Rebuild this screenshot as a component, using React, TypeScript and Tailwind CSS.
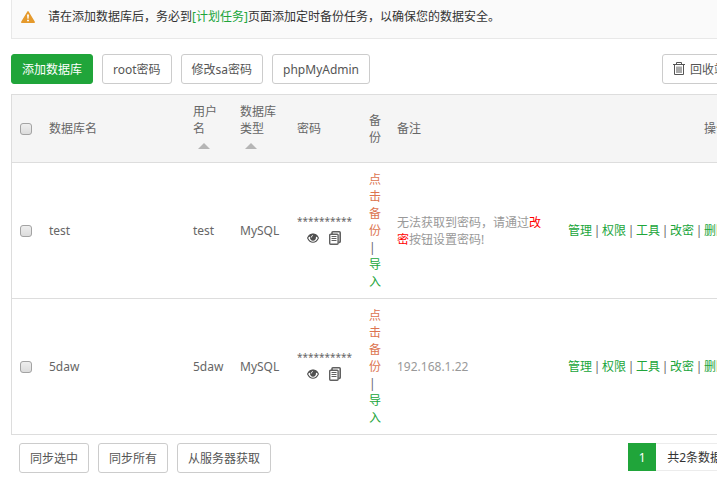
import { Fragment } from 'react';

const rows = [
    { name: 'test', user: 'test', type: 'MySQL', remark: '' },
    { name: '5daw', user: '5daw', type: 'MySQL', remark: '192.168.1.22' }
];

const actions = ['管理', '权限', '工具', '改密', '删除'];

const buttonClass = 'h-[30px] shrink-0 whitespace-nowrap rounded-[3px] border border-[#ccc] bg-white px-[10px] text-[#555]';
const checkboxClass = 'block size-3 appearance-none rounded-[3px] border border-[#a3a3a3] bg-gradient-to-b from-[#eee] to-[#dcdcdc] checked:from-[#20a53a] checked:to-[#20a53a]';
const linkClass = 'text-[#20a53a] hover:underline';

function WarningIcon() {
    return (
        <svg className="h-3 w-[14px] shrink-0" viewBox="0 0 14 12" aria-hidden="true">
            <path d="M7 .8 13.200 11.200H.8Z" fill="#e59a2c" stroke="#e59a2c" strokeWidth="1.500" strokeLinejoin="round" />
            <path d="M6 3.500h2l-.4 4.200H6.400zM6.100 8.700h1.800v1.600H6.100z" fill="#fff" />
        </svg>
    );
}

function TrashIcon() {
    return (
        <svg className="h-[14px] w-3" viewBox="0 0 12 14" fill="none" stroke="#555" aria-hidden="true">
            <path d="M0 2.500h12M3.500 2.500v-2h5v2M1.500 2.500v10h9v-10M4 4.500v6.500M6 4.500v6.500M8 4.500v6.500" />
        </svg>
    );
}

function EyeIcon() {
    return (
        <svg className="h-[10px] w-3" viewBox="0 0 12 10" aria-hidden="true">
            <path d="M.6 5C1.800 2.500 3.700 1.100 6 1.100S10.200 2.500 11.400 5C10.200 7.600 8.300 9.200 6 9.200S1.800 7.600.6 5Z" fill="#fff" stroke="#505050" strokeWidth="1.100" />
            <path d="M1.400 3.200C2.700 1.500 4.300.8 6 .8s3.300.7 4.600 2.400L8.900 3.900a3 3 0 1 1-5.800 0Z" fill="#505050" />
            <path d="M6 2.600c-1.200.1-1.800.9-1.800 1.900" fill="none" stroke="#fff" />
        </svg>
    );
}

function CopyIcon() {
    return (
        <svg className="h-[14px] w-3" viewBox="0 0 12 14" fill="none" stroke="#606060" aria-hidden="true">
            <path d="M3 2.900V1.700Q3 .8 3.900.8h6.400q.9 0 .9.900v8.800q0 .9-.9.900H9.300" strokeWidth="1.600" />
            <path d="M1.600 3.200h6.600q.9 0 .9.900v8.200q0 .9-.9.900H1.600q-.9 0-.9-.9V4.100q0-.9.9-.9Z" fill="#fff" strokeWidth="1.400" />
            <path d="M2.500 5.500h5M2.500 7.500h5M2.500 9.500h5" />
        </svg>
    );
}

function SortArrow() {
    return (
        <span className="flex h-[17px] items-center pl-[5px]">
            <svg className="h-[6px] w-3" viewBox="0 0 12 6" aria-hidden="true">
                <path d="M6 0 12 6H0Z" fill="#b5b5b5" />
            </svg>
        </span>
    );
}

export default function App() {
    return (
        <div className="min-h-screen overflow-hidden bg-white font-['Noto_Sans','Noto_Sans_CJK_SC',sans-serif] text-[12px] leading-[17px] text-[#666]">
            {/* the panel runs on a little past the right side of the window */}
            <main className="-mr-5 ml-[11px]">
                <div className="flex items-center gap-[13px] border-b border-l border-[#e8e8e8] bg-[#fafafa] pt-2 pb-[13px] pl-[9px] text-[#333]">
                    <WarningIcon />
                    <p>
                        请在添加数据库后，务必到<a href="#crontab" className={linkClass}>[计划任务]</a>页面添加定时备份任务，以确保您的数据安全。
                    </p>
                </div>

                <div className="mt-[15px] flex gap-[9px]">
                    <button type="button" className="h-[30px] shrink-0 rounded-[3px] border border-[#20a53a] bg-[#20a53a] px-[10px] text-white">
                        添加数据库
                    </button>
                    <button type="button" className={buttonClass}>root密码</button>
                    <button type="button" className={buttonClass}>修改sa密码</button>
                    <button type="button" className={buttonClass}>phpMyAdmin</button>
                    <button type="button" className={`${buttonClass} ml-auto flex items-center gap-[5px]`}>
                        <TrashIcon />
                        回收站
                    </button>
                </div>

                <div className="mt-[10px] border-x border-t border-[#ddd]">
                    <table className="w-full table-fixed text-left">
                        <colgroup>
                            <col className="w-[29px]" />
                            <col className="w-[144px]" />
                            <col className="w-[47px]" />
                            <col className="w-[57px]" />
                            <col className="w-[72px]" />
                            <col className="w-[28px]" />
                            <col />
                            <col className="w-[177px]" />
                        </colgroup>
                        <thead>
                            <tr className="border-b border-[#ddd] bg-[#f5f5f5] [&>th]:p-2 [&>th]:font-normal">
                                <th><input type="checkbox" aria-label="全选" className={checkboxClass} /></th>
                                <th>数据库名</th>
                                <th>用户名<SortArrow /></th>
                                <th>数据库类型<SortArrow /></th>
                                <th>密码</th>
                                <th>备份</th>
                                <th>备注</th>
                                <th className="text-right">操作</th>
                            </tr>
                        </thead>
                        <tbody>
                            {rows.map((row) => (
                                <tr key={row.name} className="border-b border-[#ddd] [&>td]:p-2">
                                    <td><input type="checkbox" aria-label={row.name} className={checkboxClass} /></td>
                                    <td>{row.name}</td>
                                    <td>{row.user}</td>
                                    <td>{row.type}</td>
                                    <td>
                                        <span className="block text-[10px] leading-[14px]">**********</span>
                                        <span className="flex h-5 items-center gap-[10px] pl-[10px]">
                                            <button type="button" aria-label="显示密码"><EyeIcon /></button>
                                            <button type="button" aria-label="复制密码"><CopyIcon /></button>
                                        </span>
                                    </td>
                                    <td>
                                        <a href="#backup" className="text-[#dc7450]">点击备份</a> | <a href="#import" className={linkClass}>导入</a>
                                    </td>
                                    <td className="text-[#999]">
                                        {row.remark || (
                                            <>无法获取到密码，请通过<span className="text-[#f00]">改密</span>按钮设置密码!</>
                                        )}
                                    </td>
                                    <td>
                                        <div className="flex justify-end">
                                            {actions.map((action, index) => (
                                                <Fragment key={action}>
                                                    {index > 0 && <span className="w-[10px] text-center">|</span>}
                                                    <a href={`#${row.name}`} className={linkClass}>{action}</a>
                                                </Fragment>
                                            ))}
                                        </div>
                                    </td>
                                </tr>
                            ))}
                        </tbody>
                    </table>
                </div>

                <div className="mt-2 flex items-start gap-[9px] pr-[3px] pl-2">
                    <button type="button" className={buttonClass}>同步选中</button>
                    <button type="button" className={buttonClass}>同步所有</button>
                    <button type="button" className={buttonClass}>从服务器获取</button>
                    <nav className="ml-auto flex h-7 items-stretch text-[#333]">
                        <span aria-current="page" className="flex w-7 items-center justify-center bg-[#20a53a] text-white">1</span>
                        <span className="flex items-center border border-l-0 border-[#ececec] px-[11px]">共2条数据</span>
                    </nav>
                </div>
            </main>
        </div>
    );
}
